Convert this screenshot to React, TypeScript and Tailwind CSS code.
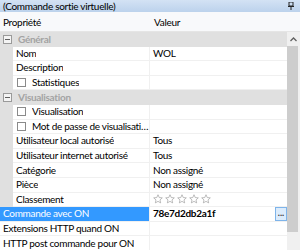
import React from "react";

type Row =
  | { kind: "cat"; label: string }
  | { kind: "item"; label: string; value?: React.ReactNode; check?: boolean; gutter: boolean; selected?: boolean; button?: boolean };

const Star = () => (
  <svg width="10" height="10" viewBox="0 0 20 20" className="shrink-0">
    <path
      d="M10 1.5l2.5 5.6 6.1.6-4.6 4.1 1.3 6-5.3-3.1-5.3 3.1 1.3-6-4.6-4.1 6.1-.6z"
      fill="none"
      stroke="#a0a0a0"
      strokeWidth="1.4"
      strokeLinejoin="round"
    />
  </svg>
);

const rows: Row[] = [
  { kind: "cat", label: "Général" },
  { kind: "item", label: "Nom", value: "WOL", gutter: true },
  { kind: "item", label: "Description", gutter: true },
  { kind: "item", label: "Statistiques", check: true, gutter: true },
  { kind: "cat", label: "Visualisation" },
  { kind: "item", label: "Visualisation", check: true, gutter: true },
  { kind: "item", label: "Mot de passe de visualisation", check: true, gutter: true },
  { kind: "item", label: "Utilisateur local autorisé", value: "Tous", gutter: true },
  { kind: "item", label: "Utilisateur internet autorisé", value: "Tous", gutter: true },
  { kind: "item", label: "Catégorie", value: "Non assigné", gutter: true },
  { kind: "item", label: "Pièce", value: "Non assigné", gutter: true },
  {
    kind: "item",
    label: "Classement",
    value: (
      <span className="flex gap-[2px]">
        <Star />
        <Star />
        <Star />
        <Star />
        <Star />
      </span>
    ),
    gutter: true,
  },
  {
    kind: "item",
    label: "Commande avec ON",
    value: <span className="font-bold">78e7d2db2a1f</span>,
    gutter: false,
    selected: true,
    button: true,
  },
  { kind: "item", label: "Extensions HTTP quand ON", gutter: false },
  { kind: "item", label: "HTTP post commande pour ON", gutter: false },
];

const Check = () => (
  <span className="mr-[6px] inline-block h-[9px] w-[9px] shrink-0 border border-[#8a8a8a] bg-white" />
);

export default function App() {
  return (
    <div
      className="relative h-[250px] w-[300px] overflow-hidden bg-white text-[10px] leading-[13px] tracking-[-0.3px] text-black"
      style={{ fontFamily: 'Lato, "Noto Sans", sans-serif' }}
    >
      {/* title bar */}
      <div className="flex h-[12px] items-center justify-between bg-gradient-to-b from-[#d3e2f4] to-[#bcd2ec] pl-[3px] pr-[6px]">
        <span>(Commande sortie virtuelle)</span>
        <svg width="6" height="8" viewBox="0 0 6 8">
          <rect x="1" y="0" width="4" height="4" fill="none" stroke="#222" strokeWidth="1" />
          <rect x="0" y="4" width="6" height="1" fill="#222" />
          <rect x="2.5" y="5" width="1" height="3" fill="#222" />
        </svg>
      </div>
      {/* header */}
      <div className="flex h-[20px] items-center border-b border-[#e5e5e5] bg-[#f8f9fb] pt-[2px]">
        <div className="w-[150px] pl-[3px]">Propriété</div>
        <div className="pl-[4px]">Valeur</div>
      </div>
      {/* body */}
      <div className="flex h-[218px]">
        <div className="flex w-[287px] flex-col">
          {rows.map((r, i) =>
            r.kind === "cat" ? (
              <div key={i} className="flex h-[14.6px] shrink-0 items-center bg-[#e0e0e0]">
                <span className="ml-[3px] mr-[6px] flex h-[9px] w-[9px] items-center justify-center border border-[#9a9a9a] bg-[#f4f4f4]">
                  <span className="h-px w-[5px] bg-[#606060]" />
                </span>
                <span className="font-bold text-[#a3a3a3]">{r.label}</span>
              </div>
            ) : (
              <div key={i} className="flex h-[14.6px] shrink-0">
                {r.gutter && <div className="w-[13px] shrink-0 bg-[#e0e0e0]" />}
                <div
                  className={`flex min-w-0 flex-1 items-center overflow-hidden border-b border-r border-[#f0f0f0] ${
                    r.check ? "pl-[4px]" : "pl-[3px]"
                  } ${r.selected ? "bg-[#3399ff] text-white" : ""}`}
                  style={{ flexBasis: 0 }}
                >
                  {r.check && <Check />}
                  <span className="truncate">{r.label}</span>
                </div>
                <div className="relative flex w-[137px] shrink-0 items-center border-b border-[#f0f0f0] pl-[3px]">
                  {r.value}
                  {r.button && (
                    <span className="absolute right-0 top-0 flex h-[14px] w-[12px] items-center justify-center border border-[#7eb4ea] bg-[#dcecfc] pb-[3px] text-[9px] font-bold tracking-normal text-[#333]">
                      ...
                    </span>
                  )}
                </div>
              </div>
            )
          )}
        </div>
        {/* scrollbar */}
        <div className="flex w-[13px] flex-col bg-[#f0f0f0]">
          <div className="flex h-[14px] items-center justify-center">
            <svg width="7" height="5" viewBox="0 0 7 5">
              <path d="M0.5 4L3.5 1L6.5 4" fill="none" stroke="#606060" strokeWidth="1.3" />
            </svg>
          </div>
          <div className="h-[186px] w-[11px] bg-[#cdcdcd]" />
        </div>
      </div>
    </div>
  );
}
